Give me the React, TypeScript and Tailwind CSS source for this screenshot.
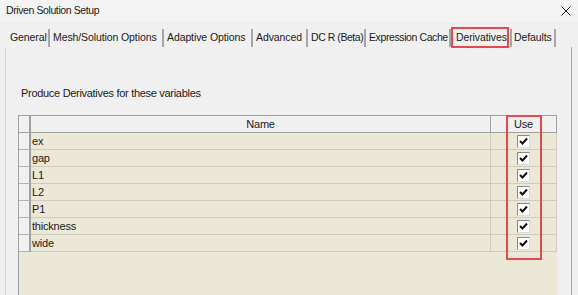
import React from "react";

const tabs: [string, number, string][] = [
  ["General", 43, "tracking-[-0.1px]"],
  ["Mesh/Solution Options", 114, "tracking-[-0.1px]"],
  ["Adaptive Options", 89, "tracking-[-0.1px]"],
  ["Advanced", 55, "tracking-[-0.1px]"],
  ["DC R (Beta)", 58, "tracking-[-0.45px]"],
  ["Expression Cache", 85, "tracking-[-0.4px]"],
];

const variables = ["ex", "gap", "L1", "L2", "P1", "thickness", "wide"];

function CheckBox() {
  return (
    <div className="w-[13px] h-[13px] bg-white border border-t-[#8a8a8a] border-l-[#8a8a8a] border-r-[#dcdcdc] border-b-[#dcdcdc] flex items-center justify-center">
      <svg width="9" height="8" viewBox="0 0 9 8">
        <path d="M1 4 L3.5 6.5 L8 1.5" fill="none" stroke="#111" strokeWidth="2" />
      </svg>
    </div>
  );
}

export default function App() {
  return (
    <div
      className="w-[578px] h-[295px] overflow-hidden bg-[#f0f0f0] text-[#1a1a1a] flex flex-col"
      style={{ fontFamily: '"Liberation Sans", Arial, sans-serif' }}
    >
      {/* title bar */}
      <div className="h-[22px] shrink-0 bg-[#f3f3f3] flex items-center justify-between pl-[6px] pr-[7px] text-[10.5px] tracking-[-0.4px]">
        <span>Driven Solution Setup</span>
        <svg width="10" height="10" viewBox="0 0 10 10">
          <path d="M0.5 0.5 L9.5 9.5 M9.5 0.5 L0.5 9.5" stroke="#222" strokeWidth="1" />
        </svg>
      </div>

      {/* tabs */}
      <div className="mt-[5px] h-[20px] shrink-0 flex items-end pl-[7px] text-[10.5px]">
        {tabs.map(([label, w, tr]) => (
          <div
            key={label}
            className={`h-[18px] pl-[3px] border-r-2 border-[#a6a6a6] flex items-center whitespace-nowrap ${tr}`}
            style={{ width: w }}
          >
            {label}
          </div>
        ))}
        <div className="w-[58px] h-[21px] -mb-px border-2 border-[#e5484d] bg-[#f0f0f0] pl-[3px] flex items-center whitespace-nowrap tracking-[-0.1px]">
          Derivatives
        </div>
        <div className="w-[46px] h-[18px] ml-px border-l-2 border-r-2 border-[#a6a6a6] pl-[2px] flex items-center whitespace-nowrap tracking-[-0.1px]">
          Defaults
        </div>
      </div>

      {/* tab panel */}
      <div className="ml-[5px] w-[567px] flex-1 border-l border-r border-l-[#d8d8d8] border-r-[#a8a8a8] pt-[38px] pl-[12px]">
        <div className="pl-[3px] h-[16px] leading-[16px] text-[11px] tracking-[-0.3px]">
          Produce Derivatives for these variables
        </div>

        <div className="relative mt-[14px] w-[539px] h-[200px] bg-[#ebe8d8] border-l border-t border-[#a0a0a0] text-[11px] tracking-[-0.2px]">
          {/* header */}
          <div className="flex h-[17px] bg-[#f0f0f0] border-b border-[#a0a0a0]">
            <div className="w-[12px] border-r-2 border-[#a0a0a0]" />
            <div className="flex-1 flex items-center justify-center">Name</div>
            <div className="w-[67px] border-l border-r border-[#a0a0a0] flex items-center justify-center">Use</div>
          </div>
          {variables.map((v) => (
            <div key={v} className="flex h-[17px]">
              <div className="w-[12px] bg-[#f0f0f0] border-r-2 border-b border-r-[#a0a0a0] border-b-[#b4b4b4]" />
              <div className="flex-1 pl-[1px] flex items-center border-b border-[#cfccbd]">{v}</div>
              <div className="w-[67px] border-l border-b border-r border-[#cfccbd] flex items-center justify-center">
                <CheckBox />
              </div>
            </div>
          ))}
          {/* annotation around the Use column */}
          <div className="absolute left-[487px] top-[-1px] w-[36px] h-[145px] border-2 border-[#e5484d]" />
        </div>
      </div>
    </div>
  );
}
